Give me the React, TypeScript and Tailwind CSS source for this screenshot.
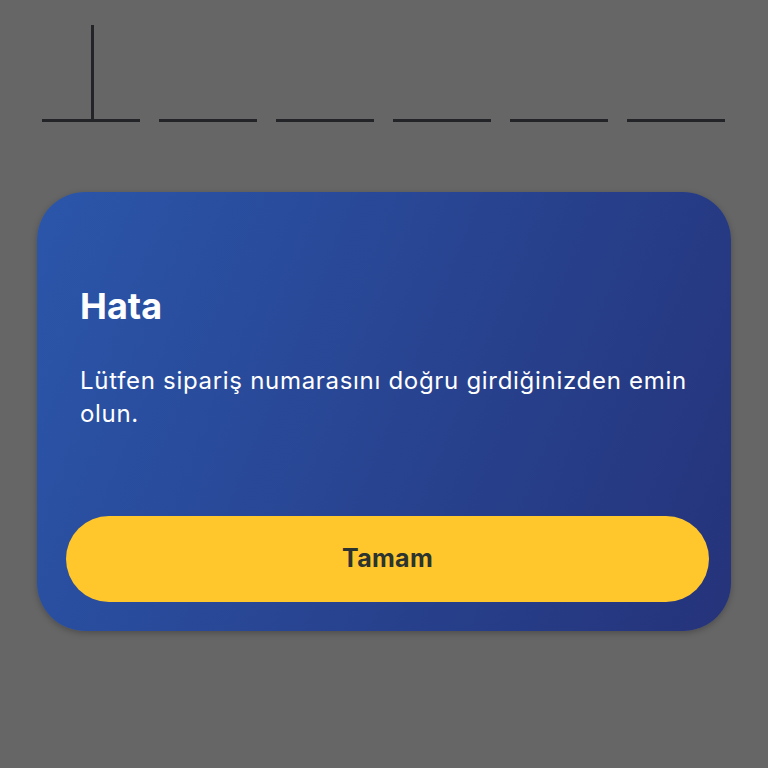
import React from 'react';

const Slot = ({ active }: { active?: boolean }) => (
  <div className="relative h-[96px] w-[98px] border-b-[3px] border-[#222428]">
    {active && <div className="absolute bottom-0 left-[49px] h-[94px] w-[3px] bg-[#222428]" />}
  </div>
);

const App = () => {
  return (
    <div
      className="flex h-[768px] w-[768px] flex-col bg-[#666666] pt-[26px]"
      style={{ fontFamily: 'Inter, "Noto Sans", sans-serif' }}
    >
      {/* code slots */}
      <div className="flex gap-[19px] pl-[42px]">
        <Slot active />
        <Slot />
        <Slot />
        <Slot />
        <Slot />
        <Slot />
      </div>

      {/* error card */}
      <div className="ml-[37px] mt-[70px] flex h-[439px] w-[694px] flex-col rounded-[48px] bg-linear-[112deg] from-[#2b56aa] to-[#25337a] pl-[29px] pt-[92px] shadow-[0_2px_6px_rgba(0,0,0,0.25)]">
        <h1 className="pl-[14px] text-[36px] font-bold leading-[44px] text-white">Hata</h1>
        <p className="mt-[36px] w-[630px] pl-[14px] text-[24px] leading-[33px] tracking-[0.7px] text-white">
          Lütfen sipariş numarasını doğru girdiğinizden emin olun.
        </p>
        <button className="mt-auto mb-[29px] h-[86px] w-[643px] rounded-full bg-[#ffc72c] text-[25px] font-bold tracking-[0.3px] text-[#2d3430]">
          Tamam
        </button>
      </div>
    </div>
  );
};

export default App;
